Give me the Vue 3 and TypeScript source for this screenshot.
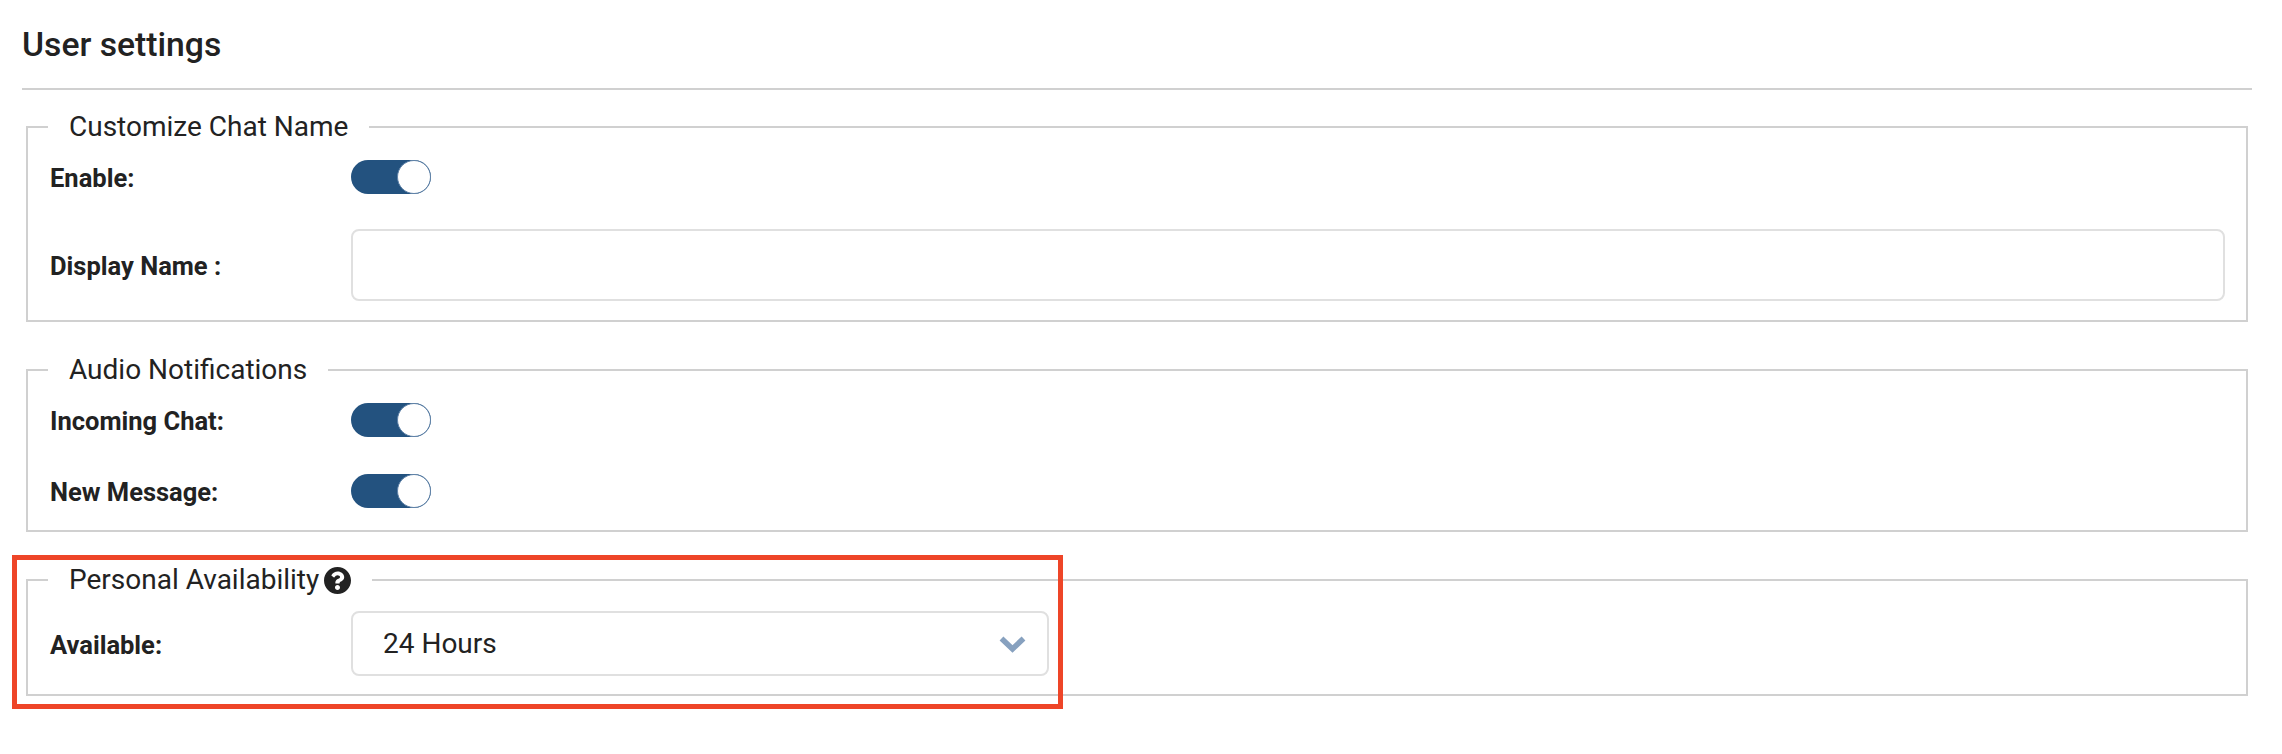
<script setup lang="ts">
import { reactive, ref } from 'vue'

// user settings form state
const settings = reactive({
  customName: true,
  incomingChat: true,
  newMessage: true,
})
const displayName = ref('')
const available = ref('24 Hours')
</script>

<template>
  <div class="page">
    <h1 class="title">User settings</h1>
    <hr class="rule" />

    <fieldset class="group group-name">
      <legend>Customize Chat Name</legend>
      <div class="row row-toggle">
        <label class="row-label">Enable:</label>
        <button class="toggle" :class="{ on: settings.customName }" type="button" aria-label="Enable" @click="settings.customName = !settings.customName"><span class="knob" /></button>
      </div>
      <div class="row row-input">
        <label class="row-label" for="display-name">Display Name :</label>
        <input id="display-name" v-model="displayName" class="text-input" type="text" />
      </div>
    </fieldset>

    <fieldset class="group group-audio">
      <legend>Audio Notifications</legend>
      <div class="row row-toggle">
        <label class="row-label">Incoming Chat:</label>
        <button class="toggle" :class="{ on: settings.incomingChat }" type="button" aria-label="Incoming Chat" @click="settings.incomingChat = !settings.incomingChat"><span class="knob" /></button>
      </div>
      <div class="row row-toggle second">
        <label class="row-label">New Message:</label>
        <button class="toggle" :class="{ on: settings.newMessage }" type="button" aria-label="New Message" @click="settings.newMessage = !settings.newMessage"><span class="knob" /></button>
      </div>
    </fieldset>

    <div class="highlighted">
      <fieldset class="group group-avail">
        <legend>
          <span class="legend-inner">
            Personal Availability
            <svg class="help" viewBox="8 8 496 496" aria-hidden="true">
              <path fill="#222" d="M504 256c0 136.997-111.043 248-248 248S8 392.997 8 256C8 119.083 119.043 8 256 8s248 111.083 248 248zM262.655 90c-54.497 0-89.255 22.957-116.549 63.758-3.536 5.286-2.353 12.415 2.715 16.258l34.699 26.31c5.205 3.947 12.621 3.008 16.665-2.122 17.864-22.658 30.113-35.797 57.303-35.797 20.429 0 45.698 13.148 45.698 32.958 0 14.976-12.363 22.667-32.534 33.976C247.128 238.528 216 254.941 216 296v4c0 6.627 5.373 12 12 12h56c6.627 0 12-5.373 12-12v-1.333c0-28.462 83.186-29.647 83.186-106.667 0-58.002-60.165-102-116.531-102zM256 338c-25.365 0-46 20.635-46 46 0 25.364 20.635 46 46 46s46-20.636 46-46c0-25.365-20.635-46-46-46z" />
            </svg>
          </span>
        </legend>
        <div class="row">
          <label class="row-label" for="available">Available:</label>
          <div class="select-wrap">
            <select id="available" v-model="available" class="select">
              <option>24 Hours</option>
              <option>Custom</option>
            </select>
            <svg class="chevron" viewBox="0 0 27 18" aria-hidden="true">
              <polyline points="2.5,2.5 13.5,13 24.5,2.5" fill="none" stroke="#87a1bf" stroke-width="5.5" />
            </svg>
          </div>
        </div>
      </fieldset>
      <!-- red annotation drawn on top of the screenshot -->
      <div class="callout" />
    </div>
  </div>
</template>

<style scoped>
.page {
  box-sizing: border-box;
  width: 2282px;
  height: 754px;
  padding: 24px 30px 0 22px;
  background: #fff;
  color: #222;
  font-family: Roboto, "Liberation Sans", sans-serif;
  overflow: hidden;
}

.title {
  margin: 0;
  font-size: 33.7px;
  font-weight: 500;
  line-height: 42px;
}

.rule {
  margin: 22px 0 20px;
  border: 0;
  border-top: 2px solid #d0d0d0;
}

.group {
  margin: 0 4px 31px 4px;
  padding: 0 21px 19px 22px;
  border: 2px solid #d0d0d0;
  min-width: 0;
}

.group legend {
  margin-left: -2px;
  padding: 0 21px;
  font-size: 28px;
  line-height: 34px;
}

.legend-inner {
  display: inline-flex;
  align-items: center;
  gap: 5px;
}

.help {
  width: 27px;
  height: 27px;
  flex: none;
}

.row {
  display: grid;
  grid-template-columns: 301px 1fr;
  align-items: center;
}

.row-label {
  font-size: 25.5px;
  font-weight: 700;
  position: relative;
  top: 1px;
}

.row-toggle {
  margin-top: 16px;
}

.row-toggle.second {
  margin-top: 37px;
}

.row-input {
  margin-top: 35px;
}

.group-audio {
  padding-bottom: 22px;
}

.group-avail {
  margin-bottom: 0;
  padding-bottom: 18px;
}

.group-avail .row {
  margin-top: 14px;
}

.toggle {
  position: relative;
  width: 80px;
  height: 34px;
  padding: 0;
  border: 0;
  border-radius: 17px;
  background: #c9ced6;
  cursor: pointer;
}

.toggle.on {
  background: #23527f;
}

.knob {
  position: absolute;
  top: 0;
  left: 0;
  box-sizing: border-box;
  width: 34px;
  height: 34px;
  border: 1px solid #5f82a8;
  border-radius: 50%;
  background: #fff;
}

.toggle.on .knob {
  left: 46px;
}

.text-input {
  box-sizing: border-box;
  display: block;
  width: 100%;
  height: 72px;
  padding: 0 20px;
  border: 2px solid #e0e0e0;
  border-radius: 8px;
  background: #fff;
  font: inherit;
  font-size: 26px;
  outline: none;
}

.select-wrap {
  position: relative;
  width: 698px;
}

.select {
  box-sizing: border-box;
  display: block;
  width: 100%;
  height: 65px;
  padding: 0 70px 0 30px;
  border: 2px solid #e0e0e0;
  border-radius: 8px;
  background: #fff;
  color: #222;
  font-family: inherit;
  font-size: 28px;
  appearance: none;
  outline: none;
}

.chevron {
  position: absolute;
  top: 25px;
  right: 23px;
  width: 27px;
  height: 18px;
  pointer-events: none;
}

.highlighted {
  position: relative;
}

.callout {
  position: absolute;
  box-sizing: border-box;
  left: -10px;
  top: -8px;
  width: 1051px;
  height: 154px;
  border: 5px solid #ee4528;
  pointer-events: none;
}
</style>

<style>
html,
body {
  margin: 0;
  background: #fff;
}
</style>
